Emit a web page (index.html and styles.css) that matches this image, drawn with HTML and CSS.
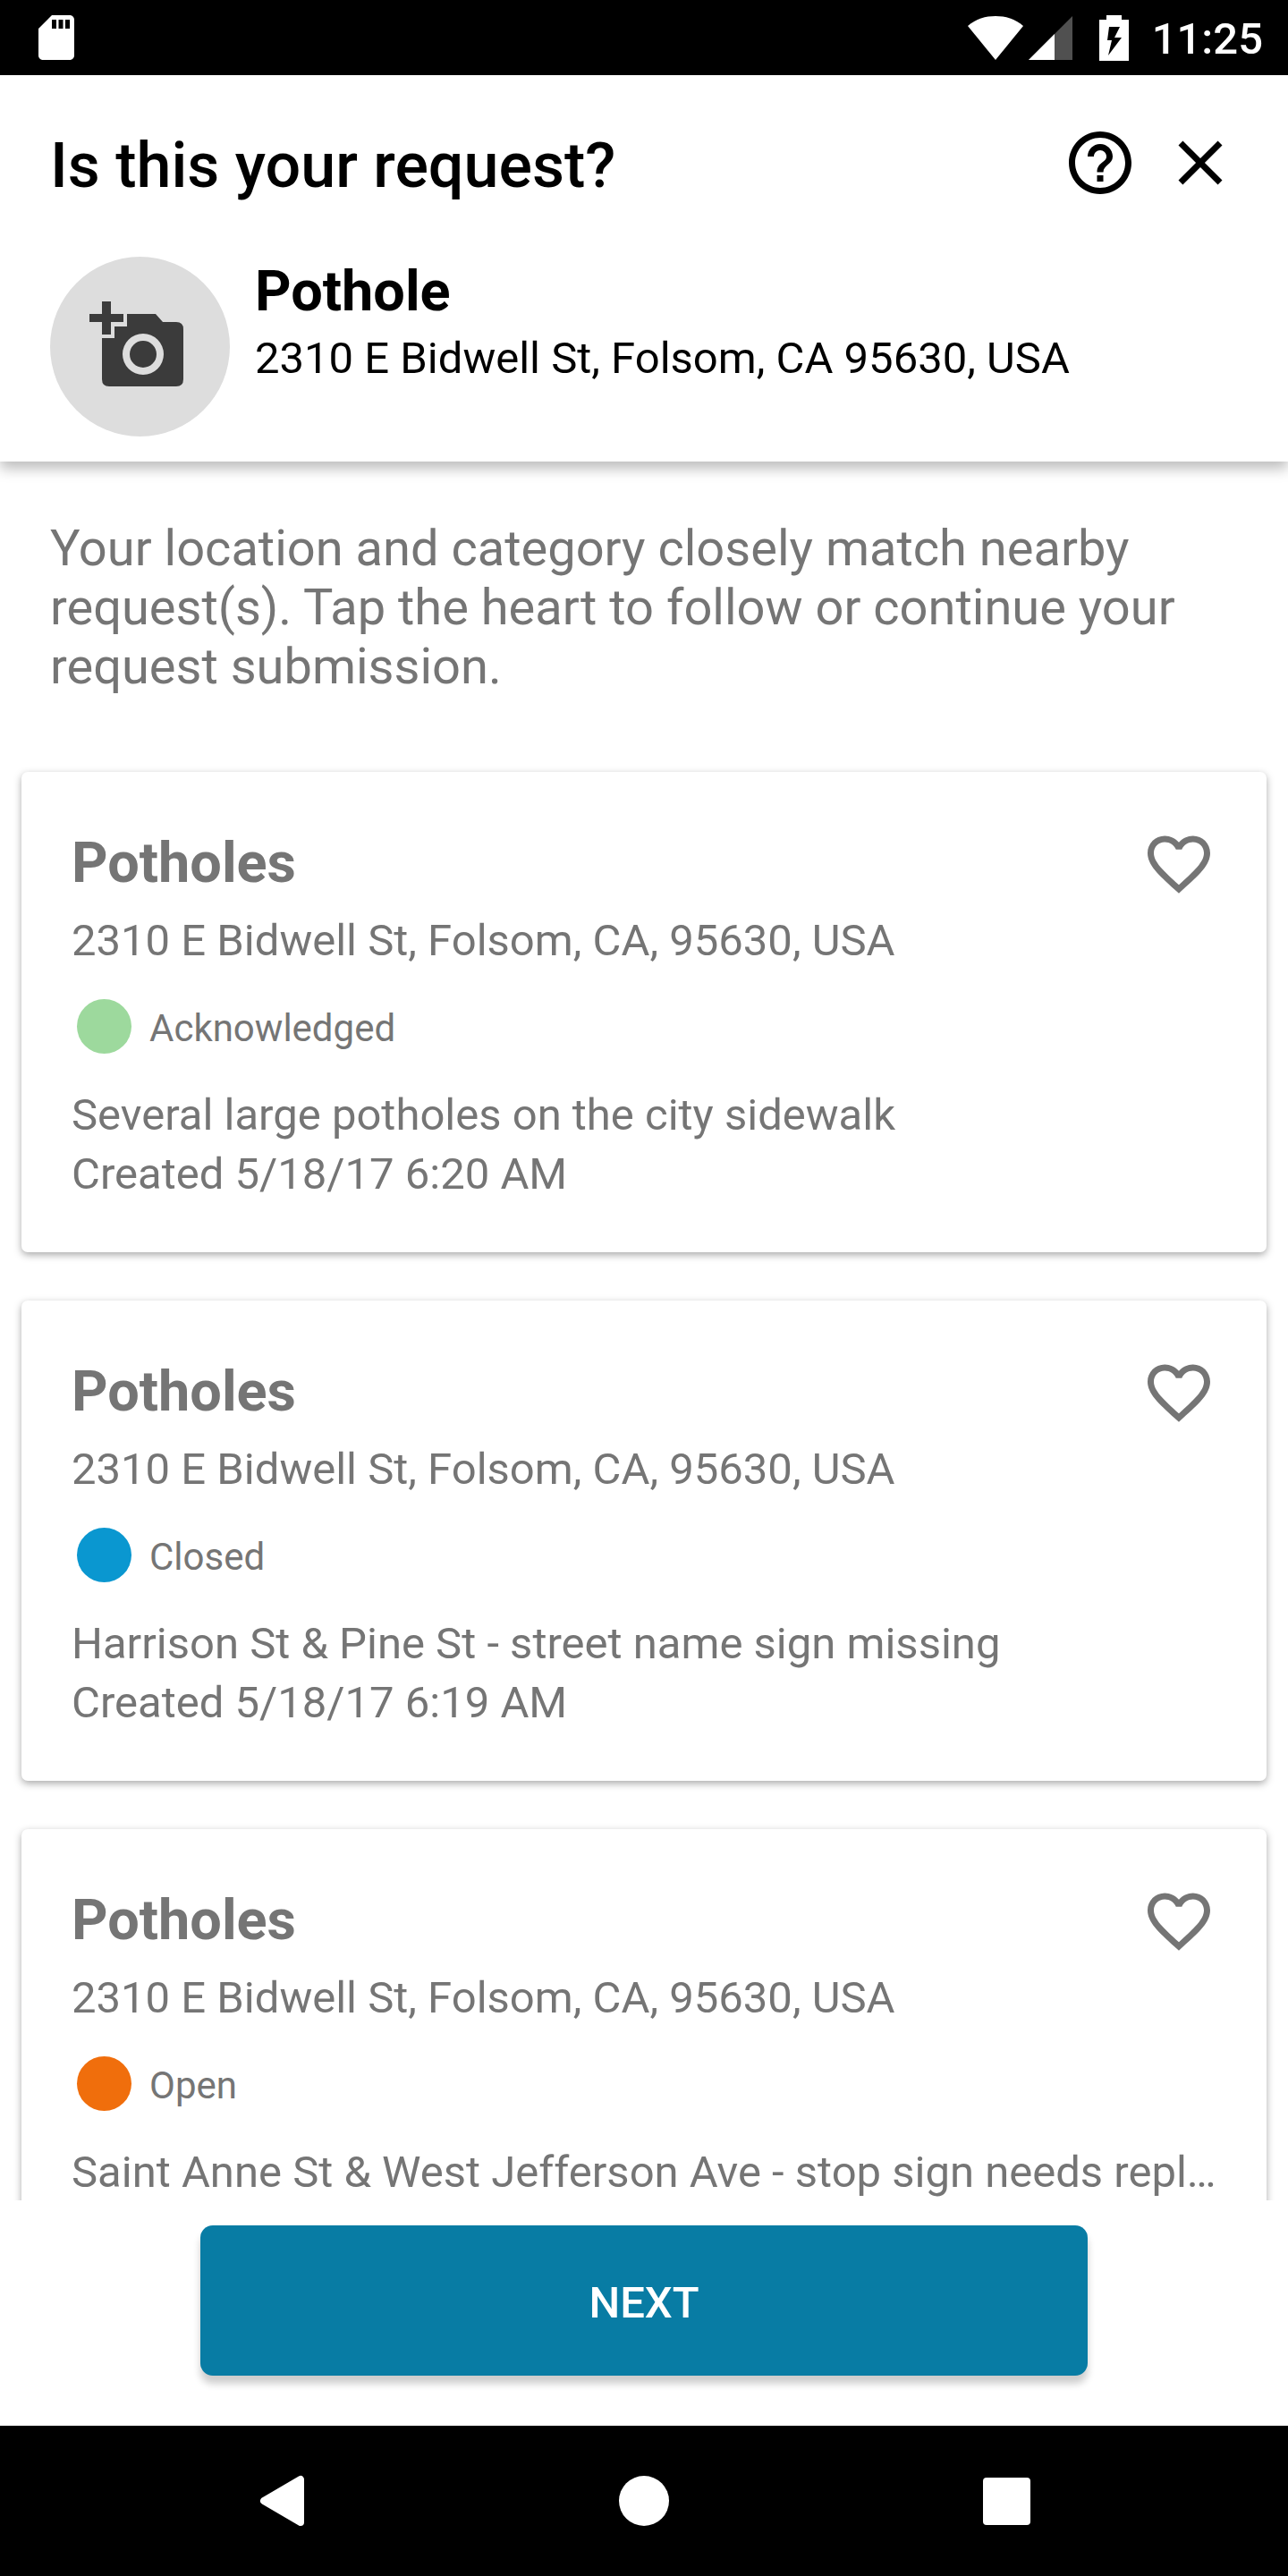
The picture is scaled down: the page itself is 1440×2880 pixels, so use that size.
FILE: index.html
```html
<!DOCTYPE html>
<html lang="en">
<head>
<meta charset="utf-8">
<meta name="viewport" content="width=device-width, initial-scale=1">
<title>Is this your request?</title>
<link rel="stylesheet" href="styles.css">
</head>
<body>
<div class="screen">
  <div class="statusbar">
    <svg class="sd" viewBox="4 2 16 20" aria-hidden="true"><path fill="#fff" fill-rule="evenodd" d="M18 2h-8L4 8v12c0 1.100.900 2 2 2h12c1.100 0 2-.9 2-2V4c0-1.100-.9-2-2-2zM10 4h2v4h-2zM13 4h2v4h-2zM16 4h2v4h-2z"/></svg>
    <div class="indicators">
      <svg class="wifi" viewBox="0 0 62 50" aria-hidden="true"><path fill="#fff" d="M0 12C9 4 20 1 31 1s22 3 31 11L31 50z"/></svg>
      <svg class="signal" viewBox="0 0 50 50" aria-hidden="true"><path fill="#505050" d="M0 50L49 1v49z"/><path fill="#fff" d="M0 50l29-29v29z"/></svg>
      <svg class="battery" viewBox="0 0 33 51" aria-hidden="true"><path fill="#fff" d="M8 0h17v5h8v46H0V5h8z"/><path fill="#000" d="M11 13h12l-6 12h8L10 45l4-17H9z"/></svg>
      <span class="time">11:25</span>
    </div>
  </div>

  <header class="header">
    <div class="toolbar">
      <h1 class="title">Is this your request?</h1>
      <button class="icon-button" type="button" aria-label="Help"><svg viewBox="0 0 24 24"><path d="M11 18h2v-2h-2v2zm1-16C6.480 2 2 6.480 2 12s4.480 10 10 10 10-4.480 10-10S17.520 2 12 2zm0 18c-4.410 0-8-3.590-8-8s3.590-8 8-8 8 3.590 8 8-3.590 8-8 8zm0-14c-2.210 0-4 1.790-4 4h2c0-1.100.9-2 2-2s2 .9 2 2c0 2-3 1.750-3 5h2c0-2.250 3-2.500 3-5 0-2.210-1.790-4-4-4z"/></svg></button>
      <button class="icon-button" type="button" aria-label="Close"><svg viewBox="0 0 24 24"><path d="M19 6.410L17.590 5 12 10.590 6.410 5 5 6.410 10.590 12 5 17.590 6.410 19 12 13.410 17.590 19 19 17.590 13.410 12z"/></svg></button>
    </div>
    <div class="summary">
      <button class="photo" type="button" aria-label="Add photo">
        <svg viewBox="0 0 106 96"><path fill="#3b3b3b" d="M14 1h10v14h14v9H24v14H14V24H0v-9h14z"/><path fill="#3b3b3b" fill-rule="evenodd" d="M42 15h32l8 9h15q8 0 8 8v56q0 8-8 8H22q-8 0-8-8V42h14V29h14zM60 37a23 23 0 1 0 0 46a23 23 0 1 0 0-46zM60 45a15 15 0 1 1 0 30a15 15 0 1 1 0-30z"/></svg>
      </button>
      <div class="summary-text">
        <h2 class="category">Pothole</h2>
        <p class="location">2310 E Bidwell St, Folsom, CA 95630, USA</p>
      </div>
    </div>
  </header>

  <main class="results">
    <p class="intro">Your location and category closely match nearby request(s). Tap the heart to follow or continue your request submission.</p>

    <article class="card">
      <div class="card-head">
        <h2 class="card-title">Potholes</h2>
        <button class="icon-button follow" type="button" aria-label="Follow"><svg viewBox="0 0 24 24"><path d="M16.500 3c-1.740 0-3.410.81-4.500 2.090C10.910 3.810 9.240 3 7.500 3 4.420 3 2 5.420 2 8.500c0 3.780 3.400 6.860 8.550 11.540L12 21.350l1.450-1.320C18.600 15.360 22 12.280 22 8.500 22 5.420 19.580 3 16.500 3zm-4.400 15.550l-.1.100-.1-.1C7.140 14.240 4 11.390 4 8.500 4 6.500 5.500 5 7.500 5c1.540 0 3.040.99 3.570 2.360h1.870C13.460 5.990 14.960 5 16.500 5c2 0 3.500 1.500 3.500 3.500 0 2.890-3.140 5.740-7.900 10.050z"/></svg></button>
      </div>
      <p class="address">2310 E Bidwell St, Folsom, CA, 95630, USA</p>
      <p class="status"><span class="dot acknowledged"></span><span>Acknowledged</span></p>
      <p class="detail">Several large potholes on the city sidewalk</p>
      <p class="detail">Created 5/18/17 6:20 AM</p>
    </article>

    <article class="card">
      <div class="card-head">
        <h2 class="card-title">Potholes</h2>
        <button class="icon-button follow" type="button" aria-label="Follow"><svg viewBox="0 0 24 24"><path d="M16.500 3c-1.740 0-3.410.81-4.500 2.090C10.910 3.810 9.240 3 7.500 3 4.420 3 2 5.420 2 8.500c0 3.780 3.400 6.860 8.550 11.540L12 21.350l1.450-1.320C18.600 15.360 22 12.280 22 8.500 22 5.420 19.580 3 16.500 3zm-4.400 15.550l-.1.100-.1-.1C7.140 14.240 4 11.390 4 8.500 4 6.500 5.500 5 7.500 5c1.540 0 3.040.99 3.570 2.360h1.870C13.460 5.990 14.960 5 16.500 5c2 0 3.500 1.500 3.500 3.500 0 2.890-3.140 5.740-7.900 10.050z"/></svg></button>
      </div>
      <p class="address">2310 E Bidwell St, Folsom, CA, 95630, USA</p>
      <p class="status"><span class="dot closed"></span><span>Closed</span></p>
      <p class="detail">Harrison St &amp; Pine St - street name sign missing</p>
      <p class="detail">Created 5/18/17 6:19 AM</p>
    </article>

    <article class="card">
      <div class="card-head">
        <h2 class="card-title">Potholes</h2>
        <button class="icon-button follow" type="button" aria-label="Follow"><svg viewBox="0 0 24 24"><path d="M16.500 3c-1.740 0-3.410.81-4.500 2.090C10.910 3.810 9.240 3 7.500 3 4.420 3 2 5.420 2 8.500c0 3.780 3.400 6.860 8.550 11.540L12 21.350l1.450-1.320C18.600 15.360 22 12.280 22 8.500 22 5.420 19.580 3 16.500 3zm-4.400 15.550l-.1.100-.1-.1C7.140 14.240 4 11.390 4 8.500 4 6.500 5.500 5 7.500 5c1.540 0 3.040.99 3.570 2.360h1.870C13.460 5.990 14.960 5 16.500 5c2 0 3.500 1.500 3.500 3.500 0 2.890-3.140 5.740-7.900 10.050z"/></svg></button>
      </div>
      <p class="address">2310 E Bidwell St, Folsom, CA, 95630, USA</p>
      <p class="status"><span class="dot open"></span><span>Open</span></p>
      <p class="detail">Saint Anne St &amp; West Jefferson Ave - stop sign needs repl…</p>
    </article>
  </main>

  <footer class="actions">
    <button class="next" type="button">NEXT</button>
  </footer>

  <nav class="navbar" aria-label="System">
    <button type="button" aria-label="Back"><svg viewBox="0 0 58 58"><path fill="#fff" stroke="#fff" stroke-width="8" stroke-linejoin="round" d="M7 29L48 5v48z"/></svg></button>
    <button type="button" aria-label="Home"><svg viewBox="0 0 58 58"><circle fill="#fff" cx="29" cy="29" r="28"/></svg></button>
    <button type="button" aria-label="Overview"><svg viewBox="0 0 58 58"><rect fill="#fff" x="5" y="3" width="53" height="53" rx="4"/></svg></button>
  </nav>
</div>
</body>
</html>
```
FILE: styles.css
```css
* { box-sizing: border-box; }

body, h1, h2, p { margin: 0; }

body {
  background: #fff;
  color: #000;
  font-family: Roboto, "Liberation Sans", sans-serif;
  font-size: 49px;
}

button {
  padding: 0;
  border: 0;
  background: none;
  color: inherit;
  font: inherit;
}

svg { display: block; }

.screen {
  display: flex;
  flex-direction: column;
  height: 100vh;
}

/* system status bar */
.statusbar {
  flex: none;
  display: flex;
  justify-content: space-between;
  align-items: center;
  height: 84px;
  padding: 0 28px 0 43px;
  background: #000;
  color: #fff;
}

.sd { width: 40px; height: 50px; }

.indicators { display: flex; align-items: center; height: 84px; }
.wifi { width: 62px; height: 50px; margin-right: 6px; }
.signal { width: 50px; height: 50px; margin-right: 29px; }
.battery { width: 33px; height: 51px; margin-right: 26px; }
.time { padding-top: 4px; font-weight: 500; line-height: 84px; }

/* request summary */
.header {
  position: relative;
  z-index: 1;
  flex: none;
  padding: 56px 56px 28px;
  background: #fff;
  box-shadow: 0 8px 14px rgba(0, 0, 0, 0.26);
}

.toolbar { display: flex; gap: 28px; }
.title { flex: 1; font-size: 70px; font-weight: 500; line-height: 90px; }

.icon-button { flex: none; width: 84px; height: 84px; }
.icon-button svg { width: 84px; height: 84px; fill: currentColor; }

.summary { display: flex; gap: 28px; margin-top: 57px; }

.photo {
  flex: none;
  display: flex;
  justify-content: center;
  align-items: center;
  width: 201px;
  height: 201px;
  padding: 0 8px 8px 0;
  border-radius: 50%;
  background: #ddd;
}
.photo svg { width: 106px; height: 96px; }

.category { font-size: 63px; font-weight: 700; line-height: 78px; }
.location { margin-top: 3px; line-height: 66px; }

/* nearby requests */
.results {
  flex: 1;
  min-height: 0;
  overflow: hidden;
  padding: 0 24px;
  color: #757575;
}

.intro { padding: 64px 32px 85px; font-size: 56px; line-height: 66px; }

.card {
  margin-bottom: 54px;
  padding: 61px 56px 54px;
  border-radius: 7px;
  background: #fff;
  box-shadow: 0 3px 8px rgba(0, 0, 0, 0.34);
}

.card-head { display: flex; justify-content: space-between; }
.card-title { font-size: 63px; font-weight: 700; line-height: 82px; }
.address { margin-top: 11px; line-height: 66px; }

.status {
  display: flex;
  align-items: flex-end;
  gap: 20px;
  margin: 32px 0 36px;
  padding-left: 6px;
  font-size: 42px;
  line-height: 56px;
}

.dot { width: 61px; height: 61px; border-radius: 50%; }
.acknowledged { background: #9dd99d; }
.closed { background: #0a97d0; }
.open { background: #f06e0c; }

.detail {
  line-height: 66px;
  white-space: nowrap;
}

/* primary action */
.actions {
  flex: none;
  display: flex;
  padding: 28px 224px 56px;
  background: #fff;
}

.next {
  flex: 1;
  height: 168px;
  padding-top: 4px;
  border-radius: 14px;
  background: #087ca4;
  box-shadow: 0 9px 8px rgba(0, 0, 0, 0.2);
  color: #fff;
  font-weight: 500;
}

/* system navigation bar */
.navbar {
  flex: none;
  display: flex;
  justify-content: center;
  height: 168px;
  background: #000;
}
.navbar button { display: flex; justify-content: center; align-items: center; width: 28%; }
.navbar svg { width: 58px; height: 58px; }
```
